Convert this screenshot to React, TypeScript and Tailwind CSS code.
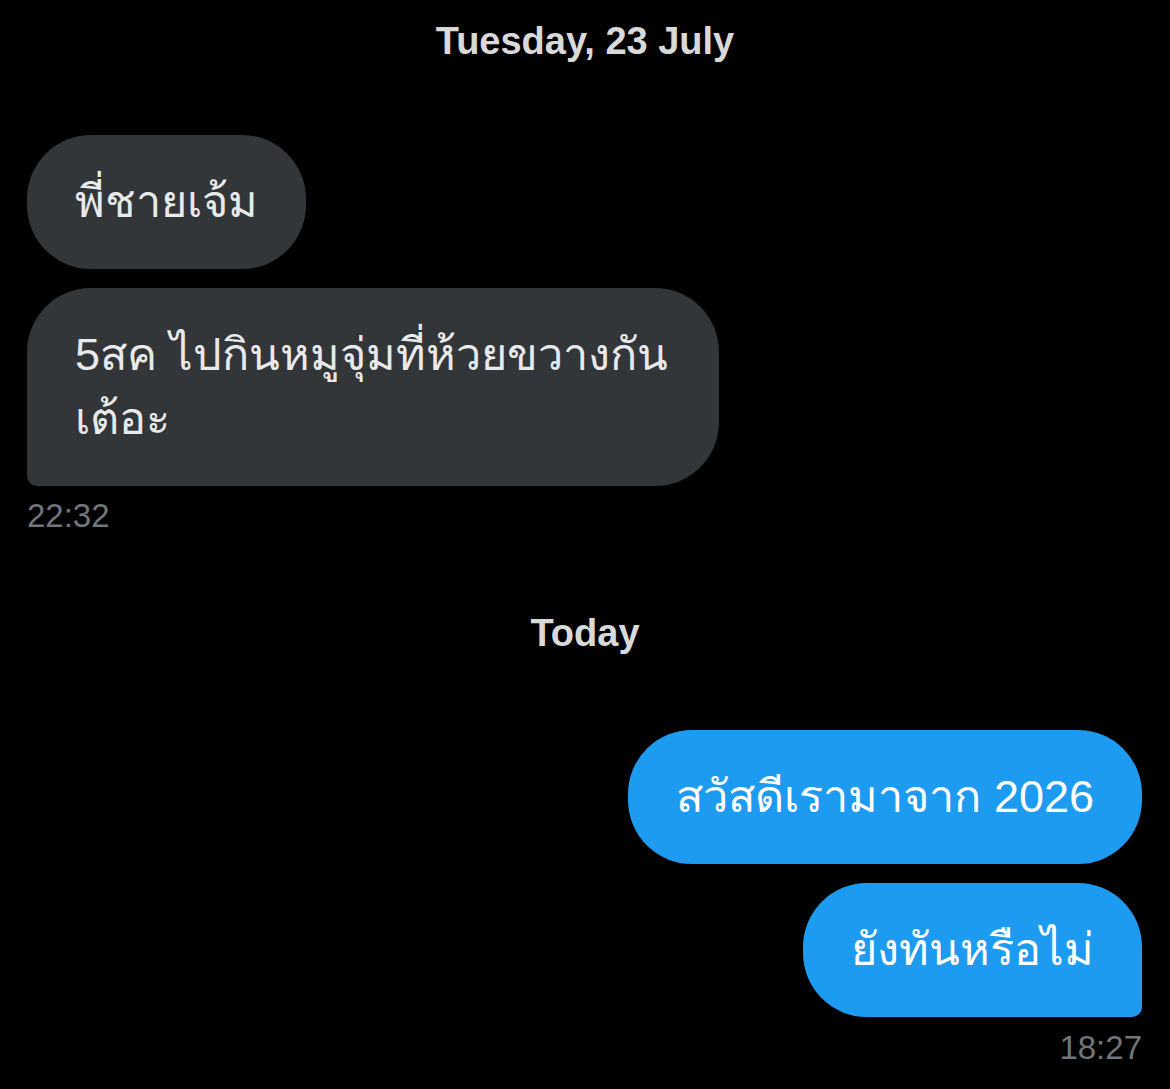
import React from 'react'

type Msg = { id: string; text: string; last?: boolean }

const received: Msg[] = [
  { id: 'r1', text: 'พี่ชายเจ้ม' },
  { id: 'r2', text: '5สค ไปกินหมูจุ่มที่ห้วยขวางกันเต้อะ', last: true },
]

const sent: Msg[] = [
  { id: 's1', text: 'สวัสดีเรามาจาก 2026' },
  { id: 's2', text: 'ยังทันหรือไม่', last: true },
]

function DayLabel({ children }: { children: React.ReactNode }) {
  return (
    <div className="text-center text-[38px] leading-[40px] font-bold text-[#d9d9d9]">{children}</div>
  )
}

function Bubble({ msg, mine }: { msg: Msg; mine?: boolean }) {
  const corner = msg.last ? (mine ? 'rounded-br-[10px]' : 'rounded-bl-[10px]') : ''
  return (
    <div
      className={`max-w-[692px] rounded-[64px] px-[48px] py-[35px] text-[45px] leading-[64px] ${corner} ${
        mine ? 'bg-[#1d9bf0] text-white' : 'bg-[#333639] text-[#e7e9ea]'
      }`}
    >
      {msg.text}
    </div>
  )
}

export default function App() {
  return (
    <div
      className="min-h-[1089px] w-[1170px] bg-black px-[27px] pt-[21px]"
      style={{ fontFamily: '"Liberation Sans", "Noto Sans", sans-serif' }}
    >
      <DayLabel>Tuesday, 23 July</DayLabel>

      <div className="mt-[74px] flex flex-col items-start gap-[19px]">
        {received.map(m => (
          <Bubble key={m.id} msg={m} />
        ))}
      </div>
      <div className="mt-[12px] text-[33px] leading-[36px] text-[#71767b]">22:32</div>

      <div className="mt-[79px]">
        <DayLabel>Today</DayLabel>
      </div>

      <div className="mt-[77px] flex flex-col items-end gap-[19px] pr-[1px]">
        {sent.map(m => (
          <Bubble key={m.id} msg={m} mine />
        ))}
      </div>
      <div className="mt-[13px] pr-[1px] text-right text-[33px] leading-[36px] text-[#71767b]">18:27</div>
    </div>
  )
}
